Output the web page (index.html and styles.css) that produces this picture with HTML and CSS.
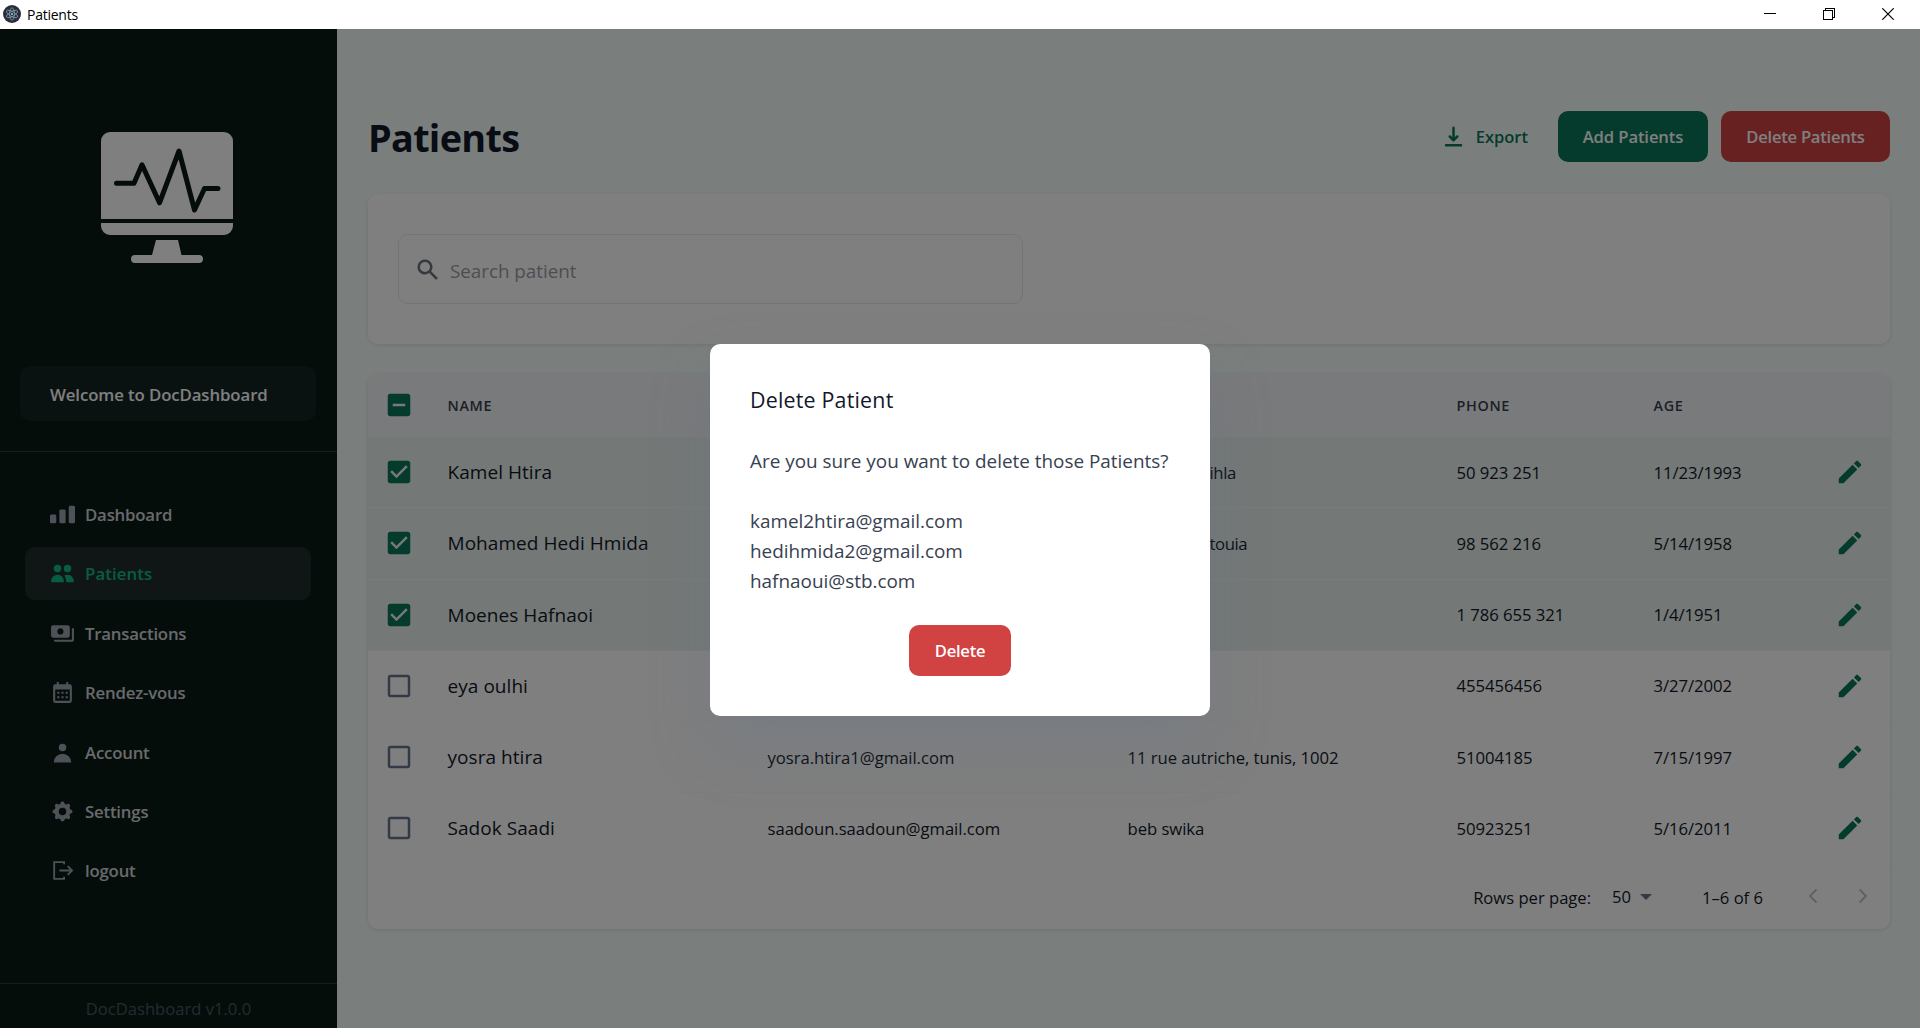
FILE: index.html
```html
<!DOCTYPE html>
<html lang="en">
<head>
<meta charset="utf-8">
<title>Patients</title>
<link rel="stylesheet" href="styles.css">
</head>
<body>
<svg class="sprite" aria-hidden="true">
  <symbol id="pencil" viewBox="0 0 24 24"><path d="M3 17.250V21h3.750L17.810 9.940l-3.750-3.750L3 17.250zM20.710 7.040c.39-.39.39-1.020 0-1.410l-2.340-2.340c-.39-.39-1.020-.39-1.410 0l-1.830 1.830 3.750 3.750 1.830-1.830z"/></symbol>
  <symbol id="checked" viewBox="0 0 24 24"><path d="M19 3H5c-1.11 0-2 .9-2 2v14c0 1.1.89 2 2 2h14c1.11 0 2-.9 2-2V5c0-1.1-.89-2-2-2zm-9 14l-5-5 1.41-1.41L10 14.17l7.59-7.59L19 8l-9 9z"/></symbol>
  <symbol id="unchecked" viewBox="0 0 24 24"><path d="M19 5v14H5V5h14m0-2H5c-1.1 0-2 .9-2 2v14c0 1.1.9 2 2 2h14c1.1 0 2-.9 2-2V5c0-1.1-.9-2-2-2z"/></symbol>
  <symbol id="partial" viewBox="0 0 24 24"><path d="M19 3H5c-1.1 0-2 .9-2 2v14c0 1.1.9 2 2 2h14c1.1 0 2-.9 2-2V5c0-1.1-.9-2-2-2zm-2 10H7v-2h10v2z"/></symbol>
</svg>

<header class="titlebar">
  <svg class="app-icon" viewBox="0 0 18 18"><circle cx="9" cy="9" r="9" fill="#2b2e3a"/><g fill="none" stroke="#7f9fb0" stroke-width=".8"><ellipse cx="9" cy="9" rx="6.2" ry="2.4" transform="rotate(30 9 9)"/><ellipse cx="9" cy="9" rx="6.2" ry="2.4" transform="rotate(90 9 9)"/><ellipse cx="9" cy="9" rx="6.2" ry="2.4" transform="rotate(150 9 9)"/></g><circle cx="9" cy="9" r=".9" fill="#9feaf9"/></svg>
  <span class="app-name">Patients</span>
  <div class="window-controls">
    <svg viewBox="0 0 12 12"><path d="M0 5.5h12"/></svg>
    <svg viewBox="0 0 12 12"><path d="M.5 2.5h9v9h-9zM2.500 2.500v-2h9v9h-2"/></svg>
    <svg class="close" viewBox="0 0 12 12"><path d="M.3 .3l11.400 11.400M11.700 .3L.3 11.700"/></svg>
  </div>
</header>

<div class="app">
  <aside class="sidebar">
    <div class="brand">
      <svg class="logo" viewBox="0 0 132 132"><path fill="#fff" d="M9 0h114a9 9 0 0 1 9 9v78H0V9a9 9 0 0 1 9-9zM0 91h132v3a9 9 0 0 1-9 9H9a9 9 0 0 1-9-9zM55 108h22l3.500 15H98a4 4 0 0 1 0 8H34a4 4 0 0 1 0-8h17z"/><path fill="none" stroke="#0b1a14" stroke-width="5" stroke-linecap="round" stroke-linejoin="round" d="M15.500 51.300H33l8-18.500 17.500 38L78 19l15.500 59 10-21.500h13.500"/></svg>
    </div>
    <div class="welcome">Welcome to DocDashboard</div>
    <nav class="menu">
      <a class="item"><svg viewBox="0 0 20 20"><path d="M2 11a1 1 0 011-1h2a1 1 0 011 1v5a1 1 0 01-1 1H3a1 1 0 01-1-1v-5zM8 7a1 1 0 011-1h2a1 1 0 011 1v9a1 1 0 01-1 1H9a1 1 0 01-1-1V7zM14 4a1 1 0 011-1h2a1 1 0 011 1v12a1 1 0 01-1 1h-2a1 1 0 01-1-1V4z" transform="translate(-2.500 0) scale(1.250 1)"/></svg><span>Dashboard</span></a>
      <a class="item active"><svg viewBox="0 0 20 20"><path d="M9 6a3 3 0 11-6 0 3 3 0 016 0zM17 6a3 3 0 11-6 0 3 3 0 016 0zM12.930 17c.046-.327.070-.66.070-1a6.970 6.970 0 00-1.500-4.330A5 5 0 0119 16v1h-6.070zM6 11a5 5 0 015 5v1H1v-1a5 5 0 015-5z"/></svg><span>Patients</span></a>
      <a class="item"><svg viewBox="0 0 24 24"><path d="M19 14V6c0-1.100-.9-2-2-2H3c-1.100 0-2 .9-2 2v8c0 1.100.9 2 2 2h14c1.100 0 2-.9 2-2zm-9-1c-1.660 0-3-1.340-3-3s1.340-3 3-3 3 1.340 3 3-1.340 3-3 3zm13-6v11c0 1.100-.9 2-2 2H4v-2h17V7h2z"/></svg><span>Transactions</span></a>
      <a class="item"><svg viewBox="0 0 24 24"><path fill-rule="evenodd" d="M5 4h1.500V2h2v2h7V2h2v2H19a2 2 0 0 1 2 2v14a2 2 0 0 1-2 2H5a2 2 0 0 1-2-2V6a2 2 0 0 1 2-2zm0 5v11h14V9zm2 2.300h2v2H7zm4 0h2v2h-2zm4 0h2v2h-2zM7 15.500h2v2H7zm4 0h2v2h-2zm4 0h2v2h-2z"/></svg><span>Rendez-vous</span></a>
      <a class="item"><svg viewBox="0 0 20 20"><path d="M10 9a3 3 0 100-6 3 3 0 000 6zm-7 9a7 7 0 1114 0H3z"/></svg><span>Account</span></a>
      <a class="item"><svg viewBox="0 0 20 20"><path fill-rule="evenodd" d="M11.490 3.170c-.38-1.560-2.600-1.560-2.980 0a1.532 1.532 0 01-2.286.948c-1.372-.836-2.942.734-2.106 2.106.54.886.061 2.042-.947 2.287-1.561.379-1.561 2.600 0 2.978a1.532 1.532 0 01.947 2.287c-.836 1.372.734 2.942 2.106 2.106a1.532 1.532 0 012.287.947c.379 1.561 2.600 1.561 2.978 0a1.533 1.533 0 012.287-.947c1.372.836 2.942-.734 2.106-2.106a1.533 1.533 0 01.947-2.287c1.561-.379 1.561-2.600 0-2.978a1.532 1.532 0 01-.947-2.287c.836-1.372-.734-2.942-2.106-2.106a1.532 1.532 0 01-2.287-.947zM10 13a3 3 0 100-6 3 3 0 000 6z"/></svg><span>Settings</span></a>
      <a class="item"><svg class="line" viewBox="0 0 24 24"><path d="M13.500 6V4h-9.500v16h9.500v-2M9 12h12M17 7.800l4.200 4.200-4.200 4.200"/></svg><span>logout</span></a>
    </nav>
    <footer class="version">DocDashboard v1.0.0</footer>
  </aside>

  <main class="content">
    <div class="page-head">
      <h1>Patients</h1>
      <div class="actions">
        <a class="export"><svg viewBox="0 0 20 20"><path fill-rule="evenodd" d="M3 17a1 1 0 011-1h12a1 1 0 110 2H4a1 1 0 01-1-1zm3.293-7.707a1 1 0 011.414 0L9 10.586V3a1 1 0 112 0v7.586l1.293-1.293a1 1 0 111.414 1.414l-3 3a1 1 0 01-1.414 0l-3-3a1 1 0 010-1.414z"/></svg><span>Export</span></a>
        <a class="btn green"><span>Add Patients</span></a>
        <a class="btn red"><span>Delete Patients</span></a>
      </div>
    </div>

    <section class="card search-card">
      <div class="search">
        <svg viewBox="0 0 20 20"><path fill-rule="evenodd" d="M8 4a4 4 0 100 8 4 4 0 000-8zM2 8a6 6 0 1110.890 3.476l4.817 4.817a1 1 0 01-1.414 1.414l-4.816-4.816A6 6 0 012 8z"/></svg>
        <span>Search patient</span>
      </div>
    </section>

    <section class="card table">
      <div class="row head"><svg class="box on"><use href="#partial"/></svg><span>NAME</span><span></span><span></span><span>PHONE</span><span>AGE</span></div>
      <div class="row selected"><svg class="box on"><use href="#checked"/></svg><span class="name">Kamel Htira</span><span></span><span class="end">ihla</span><span>50 923 251</span><span>11/23/1993</span><svg class="edit"><use href="#pencil"/></svg></div>
      <div class="row selected"><svg class="box on"><use href="#checked"/></svg><span class="name">Mohamed Hedi Hmida</span><span></span><span class="end">touia</span><span>98 562 216</span><span>5/14/1958</span><svg class="edit"><use href="#pencil"/></svg></div>
      <div class="row selected"><svg class="box on"><use href="#checked"/></svg><span class="name">Moenes Hafnaoi</span><span></span><span></span><span>1 786 655 321</span><span>1/4/1951</span><svg class="edit"><use href="#pencil"/></svg></div>
      <div class="row"><svg class="box"><use href="#unchecked"/></svg><span class="name">eya oulhi</span><span></span><span></span><span>455456456</span><span>3/27/2002</span><svg class="edit"><use href="#pencil"/></svg></div>
      <div class="row"><svg class="box"><use href="#unchecked"/></svg><span class="name">yosra htira</span><span>yosra.htira1@gmail.com</span><span>11 rue autriche, tunis, 1002</span><span>51004185</span><span>7/15/1997</span><svg class="edit"><use href="#pencil"/></svg></div>
      <div class="row last"><svg class="box"><use href="#unchecked"/></svg><span class="name">Sadok Saadi</span><span>saadoun.saadoun@gmail.com</span><span>beb swika</span><span>50923251</span><span>5/16/2011</span><svg class="edit"><use href="#pencil"/></svg></div>
      <div class="pager">
        <span class="label">Rows per page:</span>
        <span class="size">50</span>
        <svg class="caret" viewBox="0 0 12 6"><path d="M0 0h12L6 6z"/></svg>
        <span class="range">1–6 of 6</span>
        <svg class="chev" viewBox="0 0 10 16"><path d="M8.500 1.500L2 8l6.500 6.500"/></svg>
        <svg class="chev next" viewBox="0 0 10 16"><path d="M1.500 1.500L8 8l-6.500 6.500"/></svg>
      </div>
    </section>
  </main>

  <div class="overlay">
    <div class="dialog">
      <h2>Delete Patient</h2>
      <p class="question">Are you sure you want to delete those Patients?</p>
      <p>kamel2htira@gmail.com</p>
      <p>hedihmida2@gmail.com</p>
      <p>hafnaoui@stb.com</p>
      <a class="btn red confirm"><span>Delete</span></a>
    </div>
  </div>
</div>
</body>
</html>
```

FILE: styles.css
```css
* { box-sizing: border-box; margin: 0; padding: 0; }
body { width: 1920px; height: 1028px; overflow: hidden; display: flex; flex-direction: column; font-family: "Open Sans", "Noto Sans", sans-serif; color: #121828; }
svg { display: block; flex: none; fill: currentColor; }
span { white-space: nowrap; }
.sprite { position: absolute; width: 0; height: 0; }

.titlebar { height: 29px; flex: none; background: #fff; display: flex; align-items: center; padding: 0 26px 1px 3px; color: #000; }
.app-icon { width: 18px; height: 18px; }
.app-name { margin-left: 6px; font-size: 14px; letter-spacing: -.25px; }
.window-controls { margin-left: auto; display: flex; gap: 47px; }
.window-controls svg { width: 12px; height: 12px; fill: none; stroke: #000; stroke-width: 1; shape-rendering: crispEdges; }
.window-controls .close { shape-rendering: auto; stroke-width: 1.2; }

.app { position: relative; flex: 1; min-height: 0; display: flex; background: #f5fffa; }

.sidebar { width: 337px; flex: none; background: #0b1a14; color: #d1d5db; display: flex; flex-direction: column; }
.brand { height: 337px; display: flex; justify-content: center; padding-top: 103px; padding-right: 4px; }
.logo { width: 132px; height: 132px; }
.welcome { margin: 0 21px 0 20px; height: 55px; border-radius: 10px; background: #142322; color: #fff; display: flex; align-items: center; padding: 1px 0 0 30px; font-size: 16.800px; font-weight: 600; letter-spacing: -.1px; }
.menu { margin-top: 30px; border-top: 1px solid #2d3748; padding: 36px 26px 0 25px; display: flex; flex-direction: column; gap: 6.400px; flex: 1; }
.item { height: 53px; display: flex; align-items: center; border-radius: 10px; padding-left: 25px; gap: 10px; font-size: 16.800px; font-weight: 600; letter-spacing: -.2px; }
.item svg { width: 25px; height: 25px; color: #9ca3af; }
.item.active { background: #1f2d2a; color: #10b981; letter-spacing: .1px; }
.item.active svg { color: #10b981; }
.item .line { fill: none; stroke: currentColor; stroke-width: 1.800; }
.version { height: 45px; border-top: 1px solid #2d3748; color: #4b5563; display: flex; justify-content: center; align-items: center; padding-top: 4px; font-size: 16.600px; }

.content { flex: 1; min-width: 0; padding: 82px 30px 0 31px; }
.page-head { height: 51px; display: flex; align-items: center; justify-content: space-between; }
h1 { font-size: 37.800px; font-weight: 700; line-height: 50px; letter-spacing: -.7px; padding-top: 3px; }
.actions { display: flex; align-items: center; }
.export { display: flex; align-items: center; gap: 10px; margin-right: 30px; color: #0b7659; font-size: 16.500px; font-weight: 600; }
.export svg { width: 25px; height: 25px; }
.btn { height: 51px; border-radius: 10px; color: #fff; font-size: 16.600px; font-weight: 600; letter-spacing: -.1px; display: flex; align-items: center; justify-content: center; }
.green { width: 150px; background: #0b7659; margin-right: 13px; }
.red { width: 169px; background: #d14343; letter-spacing: -.25px; }

.card { background: #fff; border-radius: 10px; box-shadow: 0 1px 4px rgba(100, 116, 139, .2); }
.search-card { margin-top: 32px; height: 150px; padding: 40px 30px; }
.search { width: 625px; height: 70px; border: 1px solid #e6e8f0; border-radius: 10px; display: flex; align-items: center; padding: 0 0 0 16px; gap: 10px; color: #9a9da5; font-size: 18.800px; }
.search svg { width: 25px; height: 25px; color: #6b7280; }
.search span { padding-top: 3px; }

.table { margin-top: 30px; height: 555px; overflow: hidden; }
.row { height: 71.250px; display: grid; grid-template-columns: 79.500px 320px 360px 329px 197px 180px 1fr; align-items: center; border-bottom: 1px solid #fafafc; font-size: 16.700px; letter-spacing: -.05px; position: relative; }
.row.head { height: 63px; background: #f3f4f6; border-color: #f3f4f6; font-size: 14.400px; font-weight: 600; letter-spacing: .65px; color: #374151; }
.row.selected { background: #e8f1ee; border-color: #f3f6f8; }
.row .name { font-size: 19px; letter-spacing: .05px; }
.row .end { padding-left: 82px; letter-spacing: -.4px; }
.box { width: 30px; height: 30px; margin-left: 16px; color: #65748b; }
.box.on { color: #0b7659; }
.edit { width: 30px; height: 30px; color: #0b7659; justify-self: end; margin-right: 25px; }
.row .edit { grid-column: 7; }
.row .box { grid-column: 1; }
.pager { height: 65px; display: flex; align-items: center; justify-content: flex-end; padding-right: 22px; font-size: 16.600px; letter-spacing: 0; }
.size { margin-left: 21px; padding-bottom: 2px; }
.caret { width: 12px; height: 6px; margin-left: 9px; color: #65748b; }
.range { margin-left: 50px; }
.chev { width: 10px; height: 16px; margin-left: 45px; margin-bottom: 2px; fill: none; stroke: #c0c2c8; stroke-width: 2; }
.chev.next { margin-left: 40px; }

.overlay { position: absolute; inset: 0; background: rgba(0, 0, 0, .5); }
.dialog { position: absolute; left: 710px; top: 315px; width: 500px; height: 372px; border-radius: 10px; background: #fff; padding: 40px; box-shadow: 0 0 1px rgba(100, 116, 139, .12), 0 30px 60px rgba(100, 116, 139, .25); font-size: 18.900px; line-height: 30px; color: #374151; }
.dialog p { white-space: nowrap; }
.dialog h2 { font-size: 21.400px; line-height: 32px; font-weight: 500; letter-spacing: .2px; color: #121828; }
.dialog .question { margin: 30px 0; }
.confirm { width: 102px; margin: 29px auto 0; }
```
